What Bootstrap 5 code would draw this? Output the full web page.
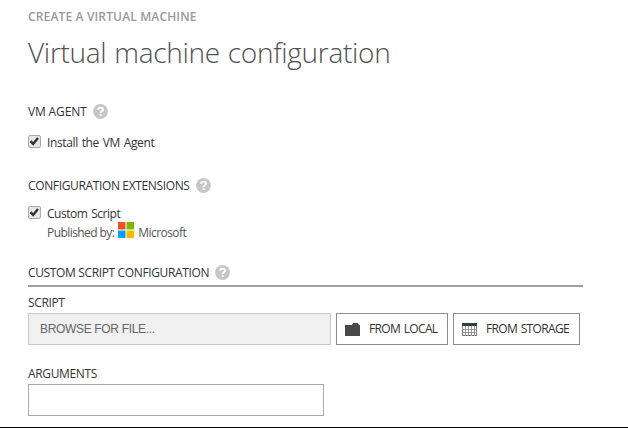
<!DOCTYPE html>
<html lang="en">
<head>
<meta charset="utf-8">
<meta name="viewport" content="width=device-width, initial-scale=1">
<title>Create a virtual machine</title>
<link href="https://cdn.jsdelivr.net/npm/bootstrap@5.3.0/dist/css/bootstrap.min.css" rel="stylesheet">
<style>
body{font-family:"Open Sans","Noto Sans",sans-serif;font-size:12px;line-height:16px;color:#333;height:428px;overflow:hidden;letter-spacing:-.36px}
.wizard{height:428px;width:628px;padding:9px 45px 0 28px;border-bottom:1px solid #000}
.crumb{font-weight:600;color:#999;letter-spacing:.15px}
.headline{font-size:28px;font-weight:300;line-height:38px;color:#505050;margin:8px 0 0;letter-spacing:-.3px;word-spacing:1px}
.sect{font-size:12px;line-height:16px;margin:0;font-weight:400;gap:6px;white-space:nowrap}
.sect svg{margin-top:-2px}
.sect-agent{margin-top:33px;letter-spacing:-.15px}
.sect-ext{margin-top:27px}
.sect-script{margin-top:24px;padding-bottom:4px;border-bottom:2px solid #a0a0a0;width:555px}
.opt{gap:6px;line-height:16px;letter-spacing:-.36px;word-spacing:1px}
.opt .form-check-input{width:13px;height:13px;border:1px solid #b0b0b0;border-radius:2px;box-shadow:none;margin:-4px 0 0}
.opt .form-check-input:checked{background-color:#e6e6e6;border-color:#aaa;background-size:13px 13px;background-image:url("data:image/svg+xml,%3csvg xmlns='http://www.w3.org/2000/svg' viewBox='0 0 13 13'%3e%3cpath fill='none' stroke='%23333' stroke-width='2.4' d='M2.5 6.2l2.6 2.7L10 3'/%3e%3c/svg%3e")}
.opt-agent{margin-top:15px}
.opt-custom{margin-top:12px;letter-spacing:-.46px}
.publisher{padding-left:19px;color:#555;height:16px;line-height:16px;margin-top:3px;letter-spacing:-.57px}
.ms{margin:-6px 4px 0 4px}
.fieldname{line-height:16px}
.fieldname-script{margin-top:8px}
.fieldname-args{margin-top:21px}
.filebar{gap:5px;margin-top:2px}
.file{width:303px;height:32px;border:1px solid #c8c8c8;background:#f0f0f0;color:#777;padding:0 11px;font:12px/30px "Liberation Sans",sans-serif;border-radius:0;letter-spacing:-.33px}
.file::placeholder{color:#666;opacity:1}
.pick{height:32px;border:1px solid #8c8c8c;border-radius:0;font-size:12px;line-height:16px;padding:0 8px;color:#333;white-space:nowrap;gap:9px;letter-spacing:-.64px;word-spacing:1px}
.pick svg{flex-shrink:0}
.pick-local{width:112px}
.pick-storage{width:127px}
.args{width:296px;height:32px;border:1px solid #aaa;border-radius:0;padding:0 8px;font-size:12px;margin-top:2px}
</style>
</head>
<body class="bg-white">
<main class="wizard d-flex flex-column">
  <div class="crumb">CREATE A VIRTUAL MACHINE</div>
  <h1 class="headline">Virtual machine configuration</h1>

  <h2 class="sect sect-agent d-flex align-items-center"><span>VM AGENT</span>
    <svg width="15" height="15" viewBox="0 0 15 15"><circle cx="7.5" cy="7.5" r="7.4" fill="#c6c6c6"/><path d="M5.1 5.8C5.2 2.9 10 2.9 10 5.8 10 7.3 7.6 7.3 7.6 9.1M7.6 10.2v1.8" fill="none" stroke="#fff" stroke-width="1.9"/></svg></h2>
  <label class="opt opt-agent d-flex align-items-center"><input class="form-check-input" type="checkbox" checked><span>Install the VM Agent</span></label>

  <h2 class="sect sect-ext d-flex align-items-center"><span>CONFIGURATION EXTENSIONS</span>
    <svg width="15" height="15" viewBox="0 0 15 15"><circle cx="7.5" cy="7.5" r="7.4" fill="#c6c6c6"/><path d="M5.1 5.8C5.2 2.9 10 2.9 10 5.8 10 7.3 7.6 7.3 7.6 9.1M7.6 10.2v1.8" fill="none" stroke="#fff" stroke-width="1.9"/></svg></h2>
  <label class="opt opt-custom d-flex align-items-center"><input class="form-check-input" type="checkbox" checked><span>Custom Script</span></label>
  <div class="publisher d-flex align-items-center"><span>Published by:</span>
    <svg class="ms" width="16" height="16" viewBox="0 0 16 16"><path fill="#f04e23" d="M0 0h7.5v7.5H0z"/><path fill="#7db700" d="M8.5 0H16v7.5H8.5z"/><path fill="#00a2ed" d="M0 8.5h7.5V16H0z"/><path fill="#fdb900" d="M8.5 8.5H16V16H8.5z"/></svg>
    <span>Microsoft</span></div>

  <h2 class="sect sect-script d-flex align-items-center"><span>CUSTOM SCRIPT CONFIGURATION</span>
    <svg width="15" height="15" viewBox="0 0 15 15"><circle cx="7.5" cy="7.5" r="7.4" fill="#c6c6c6"/><path d="M5.1 5.8C5.2 2.9 10 2.9 10 5.8 10 7.3 7.6 7.3 7.6 9.1M7.6 10.2v1.8" fill="none" stroke="#fff" stroke-width="1.9"/></svg></h2>
  <div class="fieldname fieldname-script">SCRIPT</div>
  <div class="filebar d-flex">
    <input class="file" type="text" placeholder="BROWSE FOR FILE..." readonly>
    <button class="btn pick pick-local d-flex align-items-center" type="button"><svg width="15" height="13" viewBox="0 0 15 13"><path fill="#484848" d="M0 2h7l1-2h5l1 2h1v11H0z"/></svg><span>FROM LOCAL</span></button>
    <button class="btn pick pick-storage d-flex align-items-center" type="button"><svg width="15" height="13" viewBox="0 0 15 13"><path fill="#fff" stroke="#777" d="M.5.5h14v12H.5z"/><path fill="#2f3d47" d="M0 0h15v3H0z"/><path stroke="#999" d="M3.5 3v10M6.5 3v10M9.5 3v10M12.5 3v10M0 6.5h15M0 9.5h15"/></svg><span>FROM STORAGE</span></button>
  </div>
  <label class="fieldname fieldname-args" for="args">ARGUMENTS</label>
  <input id="args" class="args" type="text">
</main>
<script src="https://cdn.jsdelivr.net/npm/bootstrap@5.3.0/dist/js/bootstrap.bundle.min.js"></script>
</body>
</html>
